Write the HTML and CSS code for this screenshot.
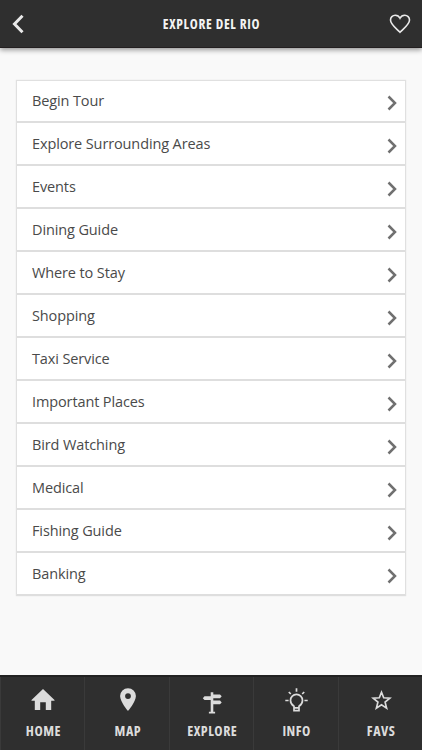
FILE: index.html
```html
<!DOCTYPE html>
<html lang="en">
  <head>
    <meta charset="UTF-8" />
    <meta name="viewport" content="width=device-width, initial-scale=1.0" />
    <title>Explore Del Rio</title>
    <link rel="stylesheet" href="styles.css">
  </head>
  <body>
    <svg class="sprite" aria-hidden="true">
      <symbol id="chevron" viewBox="0 0 10 16">
        <path d="M1.500 1.500 8 8l-6.500 6.500" fill="none" stroke="currentColor" stroke-width="2.500" />
      </symbol>
    </svg>

    <header class="header">
      <a class="header-btn" href="#" aria-label="Back">
        <svg width="14" height="20" viewBox="0 0 14 20">
          <path d="M10.500 1.800 2.500 10l8 8.200" fill="none" stroke="currentColor" stroke-width="3" />
        </svg>
      </a>
      <h1 class="title">Explore Del Rio</h1>
      <a class="header-btn" href="#" aria-label="Add to favorites">
        <svg width="22" height="20" viewBox="0 0 22 20">
          <path d="M11 18.300C7.500 14.500 1.500 10.500 1.500 6a4.700 4.700 0 0 1 4.800-4.800c2 0 3.700 1 4.700 3 1-2 2.700-3 4.700-3A4.700 4.700 0 0 1 20.500 6c0 4.500-6 8.500-9.500 12.300z" fill="none" stroke="currentColor" stroke-width="1.600" />
        </svg>
      </a>
    </header>

    <main class="content">
      <ul class="menu">
        <li><a href="#">Begin Tour <svg class="arrow"><use href="#chevron" /></svg></a></li>
        <li><a href="#">Explore Surrounding Areas <svg class="arrow"><use href="#chevron" /></svg></a></li>
        <li><a href="#">Events <svg class="arrow"><use href="#chevron" /></svg></a></li>
        <li><a href="#">Dining Guide <svg class="arrow"><use href="#chevron" /></svg></a></li>
        <li><a href="#">Where to Stay <svg class="arrow"><use href="#chevron" /></svg></a></li>
        <li><a href="#">Shopping <svg class="arrow"><use href="#chevron" /></svg></a></li>
        <li><a href="#">Taxi Service <svg class="arrow"><use href="#chevron" /></svg></a></li>
        <li><a href="#">Important Places <svg class="arrow"><use href="#chevron" /></svg></a></li>
        <li><a href="#">Bird Watching <svg class="arrow"><use href="#chevron" /></svg></a></li>
        <li><a href="#">Medical <svg class="arrow"><use href="#chevron" /></svg></a></li>
        <li><a href="#">Fishing Guide <svg class="arrow"><use href="#chevron" /></svg></a></li>
        <li><a href="#">Banking <svg class="arrow"><use href="#chevron" /></svg></a></li>
      </ul>
    </main>

    <nav class="tabs">
      <a class="tab" href="#">
        <svg width="26" height="26" viewBox="0 0 26 26">
          <path d="M13 2 1.500 13v.8H4.800V23h5.400v-7.700h5.600V23h5.400v-9.200h3.300V13z" fill="currentColor" />
        </svg>
        <span>Home</span>
      </a>
      <a class="tab" href="#">
        <svg width="26" height="26" viewBox="0 0 26 26">
          <path d="M13 1.200a7.900 7.900 0 0 0-7.900 7.900C5.100 15 13 24 13 24s7.900-9 7.900-14.900A7.900 7.900 0 0 0 13 1.200zm0 5a2.900 2.900 0 1 1 0 5.800 2.900 2.900 0 0 1 0-5.800z" fill="currentColor" />
        </svg>
        <span>Map</span>
      </a>
      <a class="tab" href="#">
        <svg width="26" height="26" viewBox="0 0 26 26">
          <path d="M11.700 5.200h2.600v2.200h6.700l1.700 1.900-1.700 1.900h-6.700v2.300h6.700l1.700 1.900-1.700 1.900h-6.700v7.500h1.800v1.800H9.900v-1.800h1.800V13.100H5.500L3.800 11.200l1.700-1.900h6.200z" fill="currentColor" />
        </svg>
        <span>Explore</span>
      </a>
      <a class="tab" href="#">
        <svg width="26" height="26" viewBox="0 0 26 26">
          <g fill="none" stroke="currentColor" stroke-width="1.700">
            <path d="M10 23.700v-4.500C7.700 17.700 6.500 16 6.500 13.400a6 6 0 0 1 12 0c0 2.600-1.200 4.300-3.500 5.800v4.500zM10 20.800h5" />
            <path d="M12.500 1.300v3.400M1.300 13.500h3.300M20.400 13.500h3.300M4.800 5l2 2M20.200 5l-2 2" />
          </g>
        </svg>
        <span>Info</span>
      </a>
      <a class="tab" href="#">
        <svg width="26" height="26" viewBox="0 0 26 26">
          <path d="M13.500 5.300l2.200 5.500 6.100.4-4.700 3.900 1.500 6-5.100-3.300-5.100 3.300 1.500-6-4.700-3.900 6.100-.4z" fill="none" stroke="currentColor" stroke-width="1.700" />
        </svg>
        <span>Favs</span>
      </a>
    </nav>
  </body>
</html>
```

FILE: styles.css
```css
* {
  box-sizing: border-box;
}

body {
  margin: 0;
  height: 100vh;
  display: flex;
  flex-direction: column;
  font-family: "Open Sans", sans-serif;
  background: #f9f9f9;
  color: #4a4a4a;
  overflow: hidden;
}

a {
  color: inherit;
  text-decoration: none;
}

svg {
  display: block;
}

.sprite {
  display: none;
}

.header {
  display: flex;
  align-items: center;
  justify-content: space-between;
  height: 48px;
  padding: 0 11px 0 12px;
  background: #2f2f2f;
  border-bottom: 1px solid #231f20;
  box-shadow: 0 2px 5px rgba(0, 0, 0, 0.4);
  color: #e9e9e9;
}

.header-btn {
  width: 22px;
}

.title {
  margin: 0;
  font-size: 13.500px;
  font-weight: 700;
  font-stretch: 75%;
  letter-spacing: 0.700px;
  text-transform: uppercase;
  color: #f4f4f4;
}

.content {
  flex: 1;
  padding: 31.500px 16px 0 15.500px;
}

.menu {
  margin: 0;
  padding: 0;
  list-style: none;
  background: #fff;
  border: 1px solid #e0e0e0;
  border-bottom: 0;
  box-shadow: 0 0 1px #ddd;
}

.menu a {
  display: flex;
  justify-content: space-between;
  height: 42.950px;
  padding: 9.800px 8px 0 15.500px;
  border-bottom: 2px solid #dedede;
  font-size: 14.500px;
  letter-spacing: -0.120px;
  line-height: 21px;
}

.arrow {
  width: 10px;
  height: 16px;
  margin-top: 5px;
  color: #707070;
}

.tabs {
  display: flex;
  height: 75px;
  background: #2f2f2f;
  border-top: 2px solid #222;
  color: #dcdcdc;
}

.tab {
  flex: 1;
  display: flex;
  flex-direction: column;
  align-items: center;
  padding: 10px 0 0 1.500px;
  border-left: 1px solid #3a3a3a;
  font-size: 14px;
  font-weight: 700;
  font-stretch: 75%;
  letter-spacing: 0.500px;
  line-height: 18px;
  text-transform: uppercase;
}

.tab svg {
  margin-bottom: 9px;
  overflow: visible;
}
```
